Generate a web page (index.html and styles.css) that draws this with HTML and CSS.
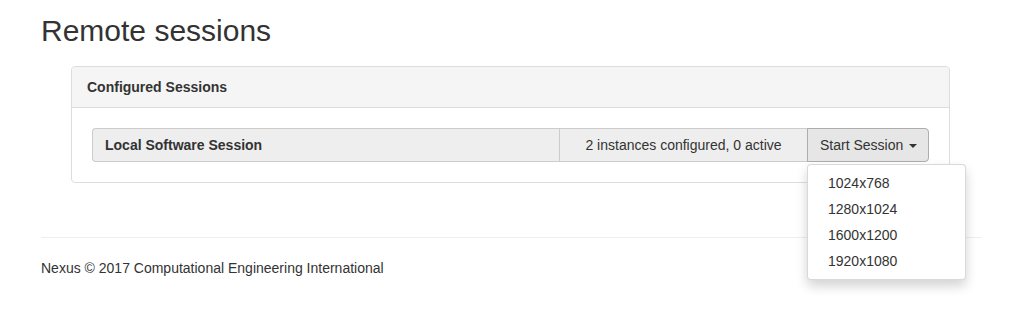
FILE: index.html
```html
<!DOCTYPE html>
<html lang="en">
<head>
    <meta charset="UTF-8">
    <title>Remote sessions</title>
    <link rel="stylesheet" href="styles.css">
</head>
<body>
    <div class="container">
        <h1>Remote sessions</h1>

        <div class="panel">
            <div class="panel-heading">Configured Sessions</div>
            <div class="panel-body">
                <div class="session-row">
                    <div class="session-name">Local Software Session</div>
                    <div class="session-info">2 instances configured, 0 active</div>
                    <div class="btn-group">
                        <button class="btn">Start Session <span class="caret"></span></button>
                        <ul class="dropdown-menu">
                            <li><a href="#">1024x768</a></li>
                            <li><a href="#">1280x1024</a></li>
                            <li><a href="#">1600x1200</a></li>
                            <li><a href="#">1920x1080</a></li>
                        </ul>
                    </div>
                </div>
            </div>
        </div>

        <footer class="footer">
            Nexus &copy; 2017 Computational Engineering International
        </footer>
    </div>
</body>
</html>
```

FILE: styles.css
```css
body {
    margin: 0;
    font-family: "Liberation Sans", Arial, sans-serif;
    font-size: 14px;
    line-height: 20px;
    color: #333;
    background: #fff;
}
.container {
    width: 940px;
    margin-left: 41px;
}
h1 {
    margin: 14px 0 19px;
    font-size: 30px;
    font-weight: normal;
    line-height: 33px;
}
.panel {
    margin: 0 31px 0 30px;
    border: 1px solid #ddd;
    border-radius: 4px;
}
.panel-heading {
    padding: 10px 15px;
    background-color: #f5f5f5;
    border-bottom: 1px solid #ddd;
    border-radius: 3px 3px 0 0;
    font-weight: bold;
}
.panel-body {
    padding: 20px;
}
.session-row {
    display: flex;
}
.session-name {
    flex: 1;
    padding: 6px 12px;
    background-color: #eee;
    border: 1px solid #ccc;
    border-right: none;
    border-radius: 4px 0 0 4px;
    font-weight: bold;
}
.session-info {
    width: 223px;
    padding: 6px 12px;
    background-color: #eee;
    border: 1px solid #ccc;
    text-align: center;
}
.btn-group {
    position: relative;
    margin-left: -1px;
}
.btn {
    display: block;
    height: 34px;
    width: 122px;
    padding: 6px 12px;
    font-family: inherit;
    font-size: 14px;
    line-height: 20px;
    color: #333;
    text-align: left;
    white-space: nowrap;
    background-color: #e6e6e6;
    border: 1px solid #adadad;
    border-radius: 0 4px 4px 0;
    cursor: pointer;
}
.caret {
    display: inline-block;
    width: 0;
    height: 0;
    margin-left: 2px;
    vertical-align: middle;
    border-top: 4px solid #333;
    border-left: 4px solid transparent;
    border-right: 4px solid transparent;
}
.dropdown-menu {
    position: absolute;
    top: 100%;
    left: 0;
    z-index: 10;
    width: 157px;
    margin: 2px 0 0;
    padding: 5px 0;
    list-style: none;
    background-color: #fff;
    border: 1px solid rgba(0, 0, 0, 0.15);
    border-radius: 4px;
    box-shadow: 0 6px 12px rgba(0, 0, 0, 0.175);
}
.dropdown-menu a {
    display: block;
    padding: 3px 20px;
    color: #333;
    text-decoration: none;
}
.footer {
    margin-top: 54px;
    padding: 20px 0 30px;
    border-top: 1px solid #eee;
}
```
